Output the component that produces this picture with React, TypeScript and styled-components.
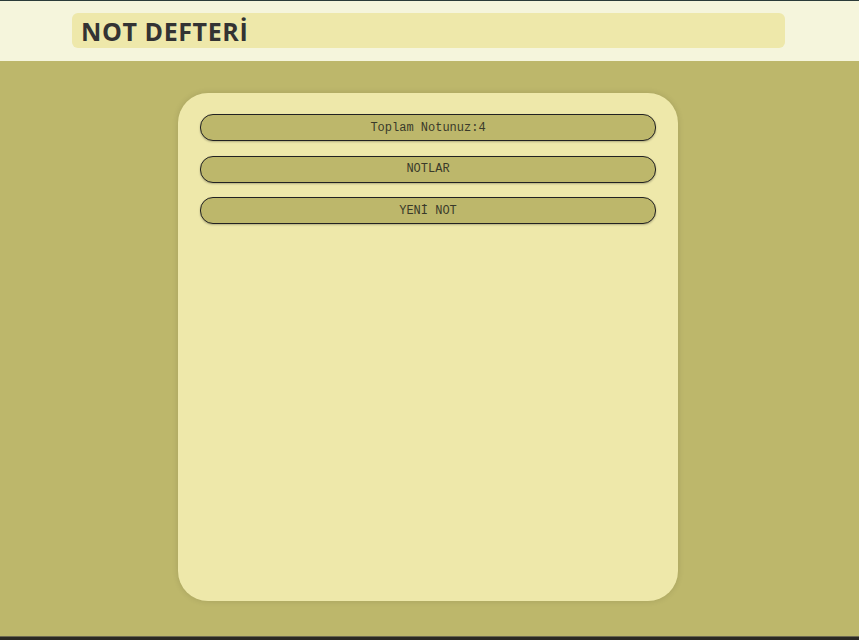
import React from "react";
import styled, { createGlobalStyle } from "styled-components";

const GlobalStyle = createGlobalStyle`
  html, body {
    margin: 0;
    padding: 0;
    height: 100%;
  }
  body {
    background-color: #bdb76b;
    border-top: 1px solid #2b3b39;
    box-sizing: border-box;
  }
  #root {
    min-height: 639px;
    display: flex;
    flex-direction: column;
  }
`;

const Header = styled.header`
  background-color: #f5f5dc;
  height: 60px;
  padding: 12px 74px 0 72px;
  box-sizing: border-box;
`;

const TitleBox = styled.div`
  background-color: #eee8aa;
  height: 35px;
  border-radius: 6px;
  padding-left: 9px;
  display: flex;
  align-items: center;
`;

const Title = styled.h1`
  margin: 0;
  font-family: "Open Sans", "Noto Sans", sans-serif;
  font-weight: 700;
  font-size: 25px;
  color: #333333;
  letter-spacing: 0.6px;
`;

const Main = styled.main`
  flex: 1;
  background-color: #bdb76b;
  padding: 32px 0 35px;
  display: flex;
  justify-content: center;
`;

const Card = styled.section`
  width: 500px;
  height: 508px;
  margin-right: 3px;
  box-sizing: border-box;
  background-color: #eee8aa;
  border-radius: 30px;
  box-shadow: 0 0 6px rgba(0, 0, 0, 0.12);
  padding: 21px 22px;
  display: flex;
  flex-direction: column;
  gap: 14.5px;
`;

const Pill = styled.button`
  height: 27px;
  width: 100%;
  background-color: #bdb76b;
  border: 1px solid #222;
  border-radius: 13px;
  box-shadow: 0 1px 2px rgba(0, 0, 0, 0.25);
  font-family: "Liberation Mono", "Courier New", monospace;
  font-size: 12px;
  color: #3a3a2a;
  cursor: pointer;
  padding: 0;
`;

const Footer = styled.footer`
  height: 4px;
  background-color: #2a2823;
  border-top: 1px solid #6b6850;
`;

const App = () => {
  const notes = ["a", "b", "c", "d"];

  return (
    <>
      <GlobalStyle />
      <Header>
        <TitleBox>
          <Title>NOT DEFTERİ</Title>
        </TitleBox>
      </Header>
      <Main>
        <Card>
          <Pill>{`Toplam Notunuz:${notes.length}`}</Pill>
          <Pill>NOTLAR</Pill>
          <Pill>YENİ NOT</Pill>
        </Card>
      </Main>
      <Footer />
    </>
  );
};

export default App;
